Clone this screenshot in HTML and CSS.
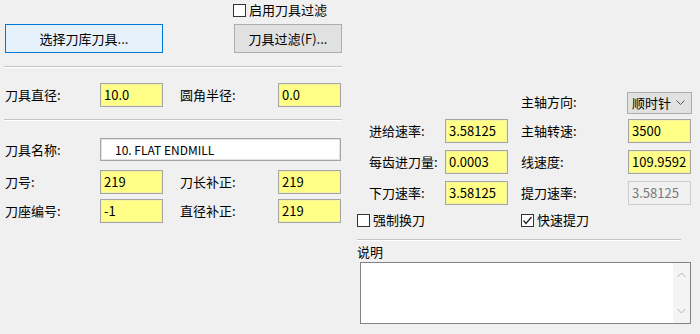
FILE: index.html
```html
<!DOCTYPE html>
<html lang="zh-CN">
<head>
<meta charset="utf-8">
<title>刀具参数</title>
<link rel="stylesheet" href="styles.css">
</head>
<body>
<div class="dlg">
  <div class="left">
    <div class="toprow">
      <div class="btn btn-primary">选择刀库刀具...</div>
      <div class="filter">
        <div class="chk"><span class="box"></span>启用刀具过滤</div>
        <div class="btn btn-filter">刀具过滤(F)...</div>
      </div>
    </div>
    <div class="sep sep-a"></div>
    <div class="grid grid-left">
      <div class="lbl">刀具直径:</div><div class="edit yellow">10.0</div>
      <div class="lbl">圆角半径:</div><div class="edit yellow">0.0</div>
    </div>
    <div class="sep sep-b"></div>
    <div class="namerow">
      <div class="lbl">刀具名称:</div><div class="edit white name">10. FLAT ENDMILL</div>
    </div>
    <div class="grid grid-left grid-tight">
      <div class="lbl">刀号:</div><div class="edit yellow">219</div>
      <div class="lbl">刀长补正:</div><div class="edit yellow">219</div>
      <div class="lbl">刀座编号:</div><div class="edit yellow">-1</div>
      <div class="lbl">直径补正:</div><div class="edit yellow">219</div>
    </div>
  </div>
  <div class="right">
    <div class="grid grid-right">
      <div class="spacer"></div>
      <div class="lbl">主轴方向:</div>
      <div class="combo">顺时针<svg class="chev" width="9" height="6" viewBox="0 0 9 6"><path d="M0.5 0.5 L4.5 4.5 L8.5 0.5" fill="none" stroke="#555" stroke-width="1"/></svg></div>

      <div class="lbl">进给速率:</div><div class="edit yellow">3.58125</div>
      <div class="lbl">主轴转速:</div><div class="edit yellow">3500</div>

      <div class="lbl">每齿进刀量:</div><div class="edit yellow">0.0003</div>
      <div class="lbl">线速度:</div><div class="edit yellow">109.9592</div>

      <div class="lbl">下刀速率:</div><div class="edit yellow">3.58125</div>
      <div class="lbl">提刀速率:</div><div class="edit disabled">3.58125</div>
    </div>
    <div class="checks">
      <div class="chk chk-a"><span class="box"></span>强制换刀</div>
      <div class="chk chk-b"><span class="box"><svg width="11" height="11" viewBox="0 0 11 11"><path d="M1.5 5.5 L4 8.5 L9.5 2" fill="none" stroke="#222" stroke-width="1.3"/></svg></span>快速提刀</div>
    </div>
    <div class="sep sep-c"></div>
    <div class="note-lbl">说明</div>
    <div class="memo">
      <div class="memo-text"></div>
      <div class="vscroll">
        <svg width="9" height="6" viewBox="0 0 9 6"><path d="M0.5 5 L4.5 1 L8.5 5" fill="none" stroke="#b5b5b5" stroke-width="1"/></svg>
        <svg width="9" height="6" viewBox="0 0 9 6"><path d="M0.5 1 L4.5 5 L8.5 1" fill="none" stroke="#b5b5b5" stroke-width="1"/></svg>
      </div>
    </div>
  </div>
</div>
</body>
</html>
```
FILE: styles.css
```css
* { box-sizing: border-box; }
html, body {
  margin: 0;
  padding: 0;
  background: #f0f0f0;
}
body {
  font-family: "Noto Sans CJK SC", "Microsoft YaHei", sans-serif;
  font-size: 13px;
  color: #000;
  width: 700px;
  height: 334px;
  overflow: hidden;
}
.dlg {
  display: flex;
  padding-left: 4px;
  gap: 14px;
}
.left {
  width: 338px;
  display: flex;
  flex-direction: column;
}
.right {
  width: 336px;
  display: flex;
  flex-direction: column;
}
.toprow {
  display: flex;
  justify-content: space-between;
  align-items: flex-end;
  padding-left: 1px;
}
.btn {
  height: 29px;
  display: flex;
  align-items: center;
  justify-content: center;
  line-height: 16px;
}
.btn-primary {
  width: 158px;
  background: #e5f1fb;
  border: 1px solid #0078d7;
}
.btn-filter {
  width: 108px;
  margin-top: 4px;
  background: #e1e1e1;
  border: 1px solid #adadad;
}
.filter {
  display: flex;
  flex-direction: column;
  align-items: flex-start;
}
.chk {
  height: 20px;
  display: flex;
  align-items: center;
  line-height: 16px;
  white-space: nowrap;
}
.box {
  width: 13px;
  height: 13px;
  border: 1px solid #333;
  background: #fff;
  margin-right: 3px;
  display: flex;
  align-items: center;
  justify-content: center;
}
.filter .chk { margin-left: -1px; }
.sep {
  height: 2px;
  border-top: 1px solid #c4c4c4;
  border-bottom: 1px solid #ffffff;
}
.sep-a { margin-top: 13px; }
.sep-b { margin-top: 12px; }
.grid {
  display: grid;
  align-items: center;
}
.grid-left {
  grid-template-columns: 95px 63px 115px 63px;
  padding-left: 1px;
  margin-top: 15px;
}
.grid-left > .lbl:nth-child(4n+3) { padding-left: 17px; }
.grid-tight {
  margin-top: 9px;
  row-gap: 5px;
}
.lbl {
  line-height: 18px;
  white-space: nowrap;
}
.edit {
  height: 24px;
  border: 1px solid #a5a5a5;
  box-shadow: inset 0 0 0 1px #e2e2e2;
  padding: 3px 0 0 3px;
  line-height: 16px;
  white-space: nowrap;
  overflow: hidden;
}
.yellow {
  background: #ffff88;
  box-shadow: inset 0 0 0 1px #f4f4a0;
}
.white { background: #fff; }
.disabled {
  background: #f0f0f0;
  border-color: #cccccc;
  box-shadow: none;
  color: #7a7a7a;
}
.namerow {
  display: grid;
  grid-template-columns: 95px 241px;
  align-items: center;
  padding-left: 1px;
  margin-top: 17px;
}
.name {
  height: 23px;
  padding-left: 14px;
  padding-top: 3px;
  font-size: 12px;
}
.grid-right {
  margin-top: 92px;
  grid-template-columns: 89px 63px 120px 64px;
  row-gap: 7px;
}
.grid-right > .lbl:nth-child(even) { padding-left: 13px; }
.grid-right > .spacer { grid-column: 1 / span 2; }
.grid-right > .spacer + .lbl { padding-left: 13px; }
.grid-right .edit { width: 63px; }
.combo {
  height: 22px;
  width: 65px;
  margin-left: -1px;
  background: #e1e1e1;
  border: 1px solid #acacac;
  display: flex;
  align-items: center;
  justify-content: space-between;
  padding: 0 6px 0 4px;
  line-height: 16px;
  margin-bottom: -2px;
}
.chev { display: block; }
.checks {
  display: flex;
  margin-top: 6px;
  height: 18px;
  align-items: center;
}
.chk-a { width: 165px; padding-left: 1px; }
.sep-c {
  margin-top: 10px;
  margin-left: 1px;
  margin-right: 11px;
}
.note-lbl {
  margin-top: 1px;
  line-height: 20px;
  padding-left: 1px;
}
.memo {
  margin-left: 4px;
  width: 331px;
  height: 62px;
  border: 1px solid #828282;
  background: #fff;
  display: flex;
}
.memo-text { flex: 1; }
.vscroll {
  width: 17px;
  background: #f4f4f4;
  display: flex;
  flex-direction: column;
  justify-content: space-between;
  align-items: center;
  padding: 9px 0 9px;
}
.vscroll svg { display: block; }
```
